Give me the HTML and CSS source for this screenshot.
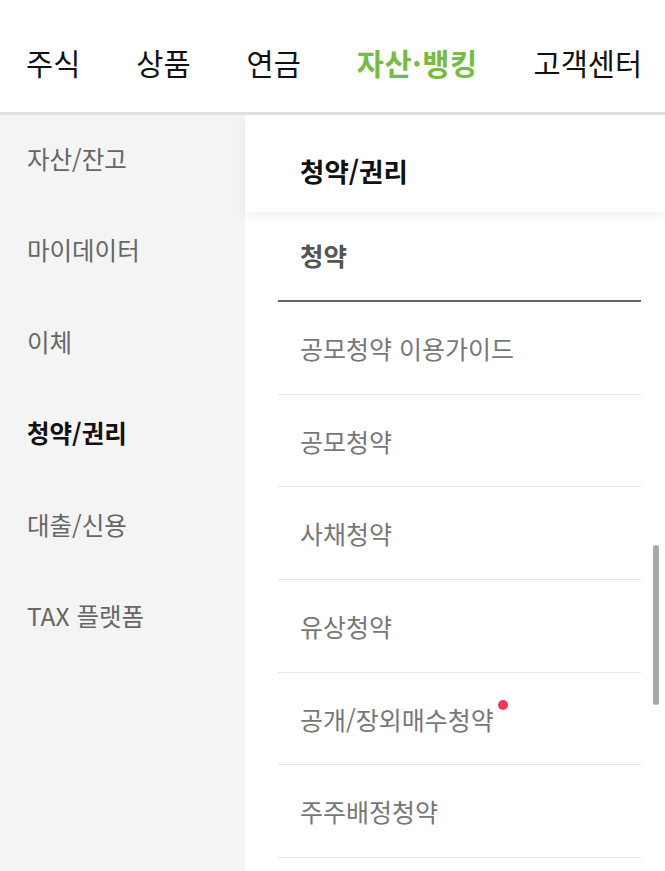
FILE: index.html
```html
<!DOCTYPE html>
<html lang="ko">
<head>
<meta charset="utf-8">
<link rel="stylesheet" href="styles.css">
</head>
<body>
<header class="topnav">
  <span class="nav-item">주식</span>
  <span class="nav-item">상품</span>
  <span class="nav-item">연금</span>
  <span class="nav-item active">자산·뱅킹</span>
  <span class="nav-item">고객센터</span>
</header>
<div class="main">
  <nav class="sidebar">
    <div class="side-item">자산/잔고</div>
    <div class="side-item">마이데이터</div>
    <div class="side-item">이체</div>
    <div class="side-item active">청약/권리</div>
    <div class="side-item">대출/신용</div>
    <div class="side-item">TAX 플랫폼</div>
  </nav>
  <section class="panel">
    <div class="panel-head">청약/권리</div>
    <div class="panel-body">
      <div class="section-title">청약</div>
      <ul class="list">
        <li class="list-item">공모청약 이용가이드</li>
        <li class="list-item">공모청약</li>
        <li class="list-item">사채청약</li>
        <li class="list-item">유상청약</li>
        <li class="list-item"><span class="has-dot">공개/장외매수청약</span></li>
        <li class="list-item">주주배정청약</li>
      </ul>
    </div>
    <div class="scrollbar"></div>
  </section>
</div>
</body>
</html>
```

FILE: styles.css
```css
* { box-sizing: border-box; }
html, body {
  margin: 0;
  padding: 0;
  background: #fff;
  font-family: "Noto Sans CJK KR", "Noto Sans", sans-serif;
  overflow: hidden;
}
body { width: 665px; height: 871px; }

.topnav {
  height: 115px;
  display: flex;
  align-items: center;
  gap: 56px;
  padding: 12px 0 0 26px;
  border-bottom: 3px solid #e0e0e0;
  background: #fff;
}
.nav-item {
  font-size: 29.5px;
  line-height: 40px;
  color: #111;
  white-space: nowrap;
}
.nav-item.active {
  color: #76bc43;
  font-weight: 700;
  letter-spacing: 0.5px;
}

.main {
  display: flex;
  height: 756px;
}
.sidebar {
  width: 245px;
  background: #f4f4f4;
}
.side-item {
  height: 91.5px;
  display: flex;
  align-items: center;
  padding: 0 0 5px 27px;
  font-size: 24.5px;
  color: #666;
}
.side-item.active {
  color: #111;
  font-weight: 700;
}

.panel {
  flex: 1;
  position: relative;
  background: #fff;
}
.panel-head {
  height: 97px;
  padding: 38px 0 0 55px;
  font-size: 26.5px;
  line-height: 36px;
  font-weight: 700;
  color: #111;
  background: #fff;
  box-shadow: 0 5px 10px rgba(0, 0, 0, 0.05);
  position: relative;
  z-index: 1;
}
.panel-body {
  padding: 0 24px 0 33px;
}
.section-title {
  height: 90px;
  padding: 25px 0 0 22px;
  font-size: 25.5px;
  line-height: 36px;
  font-weight: 700;
  color: #555;
  border-bottom: 2px solid #666;
}
.list {
  list-style: none;
  margin: 0;
  padding: 0;
}
.list-item {
  height: 92.7px;
  display: flex;
  align-items: center;
  padding: 0 0 0 22px;
  font-size: 25px;
  color: #777;
  border-bottom: 1px solid #e6e6e6;
}
.has-dot {
  position: relative;
}
.has-dot::after {
  content: "";
  position: absolute;
  right: -14px;
  top: -1px;
  width: 10px;
  height: 10px;
  border-radius: 50%;
  background: #ee3a55;
}
.scrollbar {
  position: absolute;
  right: 6px;
  top: 430px;
  width: 6px;
  height: 160px;
  border-radius: 3px;
  background: #a8a8a8;
}
```
